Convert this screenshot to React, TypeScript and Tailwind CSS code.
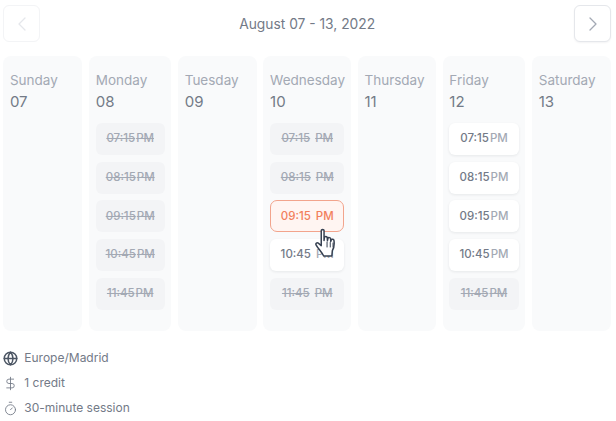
import { ChevronLeft, ChevronRight, Globe, DollarSign, Timer } from "lucide-react";

type Slot = { time: string; state: "off" | "open" | "active" };

const off = (time: string): Slot => ({ time, state: "off" });
const open = (time: string): Slot => ({ time, state: "open" });

const days: { name: string; date: string; wide: boolean; slots: Slot[] }[] = [
  { name: "Sunday", date: "07", wide: false, slots: [] },
  {
    name: "Monday",
    date: "08",
    wide: false,
    slots: [off("07:15"), off("08:15"), off("09:15"), off("10:45"), off("11:45")],
  },
  { name: "Tuesday", date: "09", wide: false, slots: [] },
  {
    name: "Wednesday",
    date: "10",
    wide: true,
    slots: [off("07:15"), off("08:15"), { time: "09:15", state: "active" }, open("10:45"), off("11:45")],
  },
  { name: "Thursday", date: "11", wide: false, slots: [] },
  {
    name: "Friday",
    date: "12",
    wide: false,
    slots: [open("07:15"), open("08:15"), open("09:15"), open("10:45"), off("11:45")],
  },
  { name: "Saturday", date: "13", wide: false, slots: [] },
];

function SlotButton({ slot, wide }: { slot: Slot; wide: boolean }) {
  if (slot.state === "active") {
    return (
      <div className="h-[32px] flex items-center justify-center rounded-[7px] border-[1.5px] border-[#f2a48c] bg-[#fff5f2] text-[11.5px] font-medium text-[#f27f5c] gap-[5px]">
        <span>{slot.time}</span>
        <span>PM</span>
      </div>
    );
  }
  if (slot.state === "open") {
    return (
      <div className={`h-[32px] flex items-center justify-center rounded-[6px] bg-white shadow-[0_1px_3px_rgba(17,24,39,0.08)] text-[11.5px] font-medium ${wide ? "gap-[5px]" : "gap-[1px]"}`}>
        <span className="text-[#737a87]">{slot.time}</span>
        <span className="text-[#a3a9b4]">PM</span>
      </div>
    );
  }
  return (
    <div className={`h-[32px] flex items-center justify-center rounded-[6px] bg-[#f3f4f6] text-[11.5px] font-medium text-[#a3a9b4] line-through ${wide ? "gap-[5px]" : "gap-[1px]"}`}>
      <span>{slot.time}</span>
      <span>PM</span>
    </div>
  );
}

export default function App() {
  return (
    <div className="relative w-[616px] h-[421px] bg-white pl-[3.3px] pr-[5px] pt-[5px] font-['Inter',sans-serif] overflow-hidden">
      {/* Header */}
      <div className="flex items-center justify-between">
        <button className="h-[37px] w-[37px] flex items-center justify-center rounded-[6px] border border-[#f3f4f6] bg-white text-[#e5e7eb]">
          <ChevronLeft className="h-[24px] w-[24px]" strokeWidth={1.3} />
        </button>
        <div className="pt-[1px] text-[13.8px] text-[#737a87]">August 07 - 13, 2022</div>
        <button className="h-[37px] w-[37px] flex items-center justify-center rounded-[6px] border border-[#e5e7eb] bg-white text-[#a3a9b4] shadow-[0_1px_2px_rgba(17,24,39,0.05)]">
          <ChevronRight className="h-[24px] w-[24px]" strokeWidth={1.3} />
        </button>
      </div>

      {/* Week */}
      <div className="mt-[14px] grid grid-cols-[79px_82px_78.5px_87.5px_78px_82.5px_78.5px] gap-x-[6.9px]">
        {days.map((day) => (
          <div key={day.name} className="h-[275px] rounded-[8px] bg-[#f9fafb] px-[6.6px] pt-[15px]">
            <div className="text-[13.5px] leading-[18px] text-[#a3a9b4]">{day.name}</div>
            <div className="mt-[3px] text-[15px] leading-[20px] text-[#737a87]">{day.date}</div>
            {day.slots.length > 0 && (
              <div className="mt-[11px] flex flex-col gap-[6.7px]">
                {day.slots.map((slot) => (
                  <SlotButton key={slot.time} slot={slot} wide={day.wide} />
                ))}
              </div>
            )}
          </div>
        ))}
      </div>

      {/* Session info */}
      <div className="mt-[18px] flex flex-col gap-[7px] text-[12px] leading-[18px] text-[#737a87]">
        <div className="flex items-center gap-[6px]">
          <Globe className="h-[15px] w-[15px] text-[#4b5563]" strokeWidth={2.4} />
          <span>Europe/Madrid</span>
        </div>
        <div className="flex items-center gap-[6px]">
          <DollarSign className="h-[15px] w-[15px] text-[#737a87]" strokeWidth={1.4} />
          <span>1 credit</span>
        </div>
        <div className="flex items-center gap-[6px]">
          <Timer className="h-[15px] w-[15px] text-[#737a87]" strokeWidth={1.4} />
          <span>30-minute session</span>
        </div>
      </div>

      {/* Mouse pointer over the 10:45 slot */}
      <svg className="absolute left-[313px] top-[228px]" width="25" height="32" viewBox="0 0 22.5 32" fill="none">
        <path
          d="M7 2.5c0-1.3 2.8-1.3 2.8 0v10l.4-3c.2-1.3 2.7-1.2 2.8.2l.2 3 .5-2.3c.3-1.2 2.6-1 2.7.4l.1 2.6.6-1.6c.4-1 2.4-.7 2.6.6.5 3.4.3 7-1.6 10.2l-.5 5.4H9.4c-1.5-3.6-5.8-7.6-7.6-11.2-.7-1.4 1-2.6 2.2-1.6L7 17.6V2.5z"
          fill="white"
          stroke="#374151"
          strokeWidth="1.5"
          strokeLinejoin="round"
        />
        <path d="M12.8 14v5M16 14.5V19M18.8 15v4" stroke="#374151" strokeWidth="1" strokeLinecap="round" />
      </svg>
    </div>
  );
}
